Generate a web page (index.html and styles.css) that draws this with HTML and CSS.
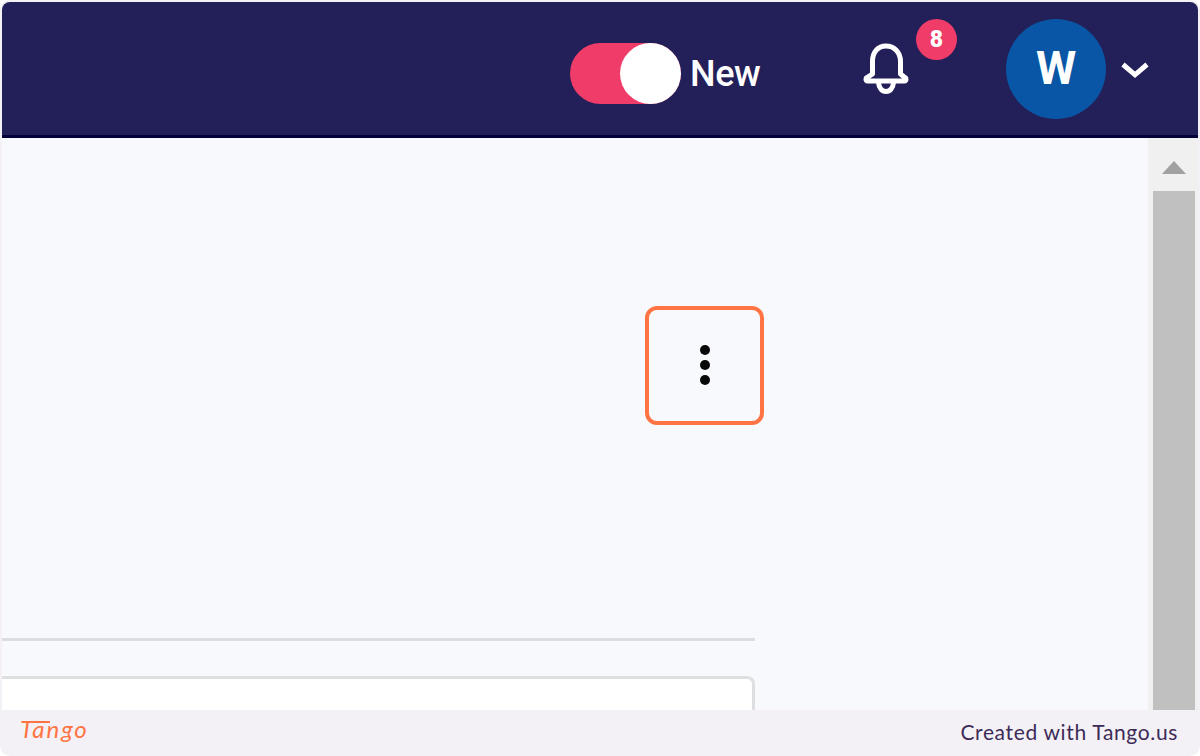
FILE: index.html
```
<!DOCTYPE html>
<html lang="en">
<head>
    <meta charset="UTF-8">
    <meta name="viewport" content="width=device-width, initial-scale=1.0">
    <title>Tango</title>
    <link rel="stylesheet" href="styles.css">
</head>
<body>

    <div class="frame">
        <!-- Top bar -->
        <header class="topbar">
            <div class="switch">
                <div class="switch__track"><div class="switch__knob"></div></div>
                <span class="switch__label">New</span>
            </div>

            <div class="bell">
                <svg width="46" height="52" viewBox="0 0 46 52" fill="none" stroke="#fff" stroke-width="5" stroke-linejoin="round" stroke-linecap="round">
                    <path d="M9.500 31V18.500C9.500 9 15 3 23 3S37.500 9 37.500 18.500V31L42.800 35.200Q43.600 38 41 38H5Q2.400 38 3.200 35.200Z"/>
                    <path d="M15.500 39.500C16 45 19 48.500 23 48.500S30 45 30.500 39.500"/>
                </svg>
                <span class="bell__badge">8</span>
            </div>

            <div class="avatar">W</div>
            <svg class="chevron" width="28" height="18" viewBox="0 0 28 18" fill="none" stroke="#fff" stroke-width="5">
                <path d="M2 3.500L14 13.800L26 3.500"/>
            </svg>
        </header>

        <main class="content">
            <div class="page">
                <button class="menu" aria-label="More">
                    <span class="menu__dot"></span>
                    <span class="menu__dot"></span>
                    <span class="menu__dot"></span>
                </button>
                <div class="divider"></div>
                <div class="card"></div>
            </div>

            <div class="scrollbar">
                <div class="scrollbar__arrow"></div>
                <div class="scrollbar__thumb"></div>
            </div>
        </main>

        <footer class="footer">
            <span class="footer__logo">Tango</span>
            <span class="footer__credit">Created with Tango.us</span>
        </footer>
    </div>

</body>
</html>
```
FILE: styles.css
```
* {
    box-sizing: border-box;
}

body {
    margin: 0;
    background: #ffffff;
    font-family: Roboto, sans-serif;
}

.frame {
    display: flex;
    flex-direction: column;
    width: 1200px;
    height: 756px;
    padding: 2px 2px 0;
    border-radius: 10px;
    background: #f3f1f6;
    overflow: hidden;
}

/* Top bar */
.topbar {
    display: flex;
    align-items: center;
    justify-content: flex-end;
    height: 136px;
    padding-right: 49px;
    background: #231f58;
    border-bottom: 3px solid #04003b;
    border-radius: 8px 8px 0 0;
    color: #ffffff;
}

.switch {
    display: flex;
    align-items: center;
    gap: 9px;
    margin: 10px 102px 0 0;
}

.switch__track {
    display: flex;
    justify-content: flex-end;
    width: 111px;
    height: 61px;
    border-radius: 31px;
    background: #ef3c69;
}

.switch__knob {
    width: 61px;
    height: 61px;
    border-radius: 50%;
    background: #ffffff;
}

.switch__label {
    width: 71px;
    font-size: 36px;
    font-weight: 500;
    line-height: 40px;
    letter-spacing: -0.4px;
}

.bell {
    position: relative;
    width: 46px;
    height: 52px;
    margin-right: 97px;
}

.bell svg {
    display: block;
}

.bell__badge {
    position: absolute;
    top: -24px;
    left: 53px;
    width: 41px;
    height: 41px;
    border-radius: 50%;
    background: #ef3c69;
    font-size: 23px;
    font-weight: 900;
    line-height: 41px;
    text-align: center;
}

.avatar {
    width: 100px;
    height: 100px;
    margin-right: 15px;
    border-radius: 50%;
    background: #0856a5;
    font-size: 46px;
    font-weight: 700;
    line-height: 99px;
    text-align: center;
}

.chevron {
    margin-top: 2px;
}

/* Page area */
.content {
    display: flex;
    height: 572px;
    background: #f8f9fd;
}

.page {
    display: flex;
    flex-direction: column;
    flex: 1;
    padding-top: 168px;
}

.menu {
    display: flex;
    flex-direction: column;
    align-items: center;
    justify-content: center;
    gap: 5px;
    width: 119px;
    height: 119px;
    margin-left: 643px;
    padding: 0 0 1px 1px;
    border: 4px solid #ff7442;
    border-radius: 12px;
    background: transparent;
}

.menu__dot {
    width: 10px;
    height: 10px;
    border-radius: 50%;
    background: #080808;
}

.divider {
    width: 753px;
    height: 3px;
    margin-top: 213px;
    background: #dcdde0;
}

.card {
    flex: 1;
    width: 753px;
    margin-top: 35px;
    border: 3px solid #dedfe0;
    border-width: 3px 3px 0 0;
    border-radius: 0 8px 0 0;
    background: #ffffff;
}

.scrollbar {
    display: flex;
    flex-direction: column;
    width: 50px;
    padding: 23px 3px 0 5px;
    background: #f0f0f0;
}

.scrollbar__arrow {
    width: 24px;
    height: 13px;
    margin: 0 auto 17px;
    background: #a1a1a1;
    clip-path: polygon(50% 0, 100% 100%, 0 100%);
}

.scrollbar__thumb {
    flex: 1;
    background: #c0c0c0;
}

/* Footer */
.footer {
    display: flex;
    align-items: center;
    justify-content: space-between;
    height: 46px;
    padding: 0 20px 3px 18px;
}

.footer__logo {
    position: relative;
    margin-bottom: 6px;
    color: #ff7442;
    font-family: Lato, sans-serif;
    font-size: 24px;
    font-style: italic;
    font-weight: 400;
    line-height: 30px;
    letter-spacing: 1.9px;
}

/* long crossbar of the T */
.footer__logo::before {
    content: "";
    position: absolute;
    top: 7px;
    left: 2px;
    width: 28px;
    height: 2px;
    background: #ff7442;
}

.footer__credit {
    color: #3d2b56;
    font-family: Lato, sans-serif;
    font-size: 21px;
    letter-spacing: 0.65px;
}
```
